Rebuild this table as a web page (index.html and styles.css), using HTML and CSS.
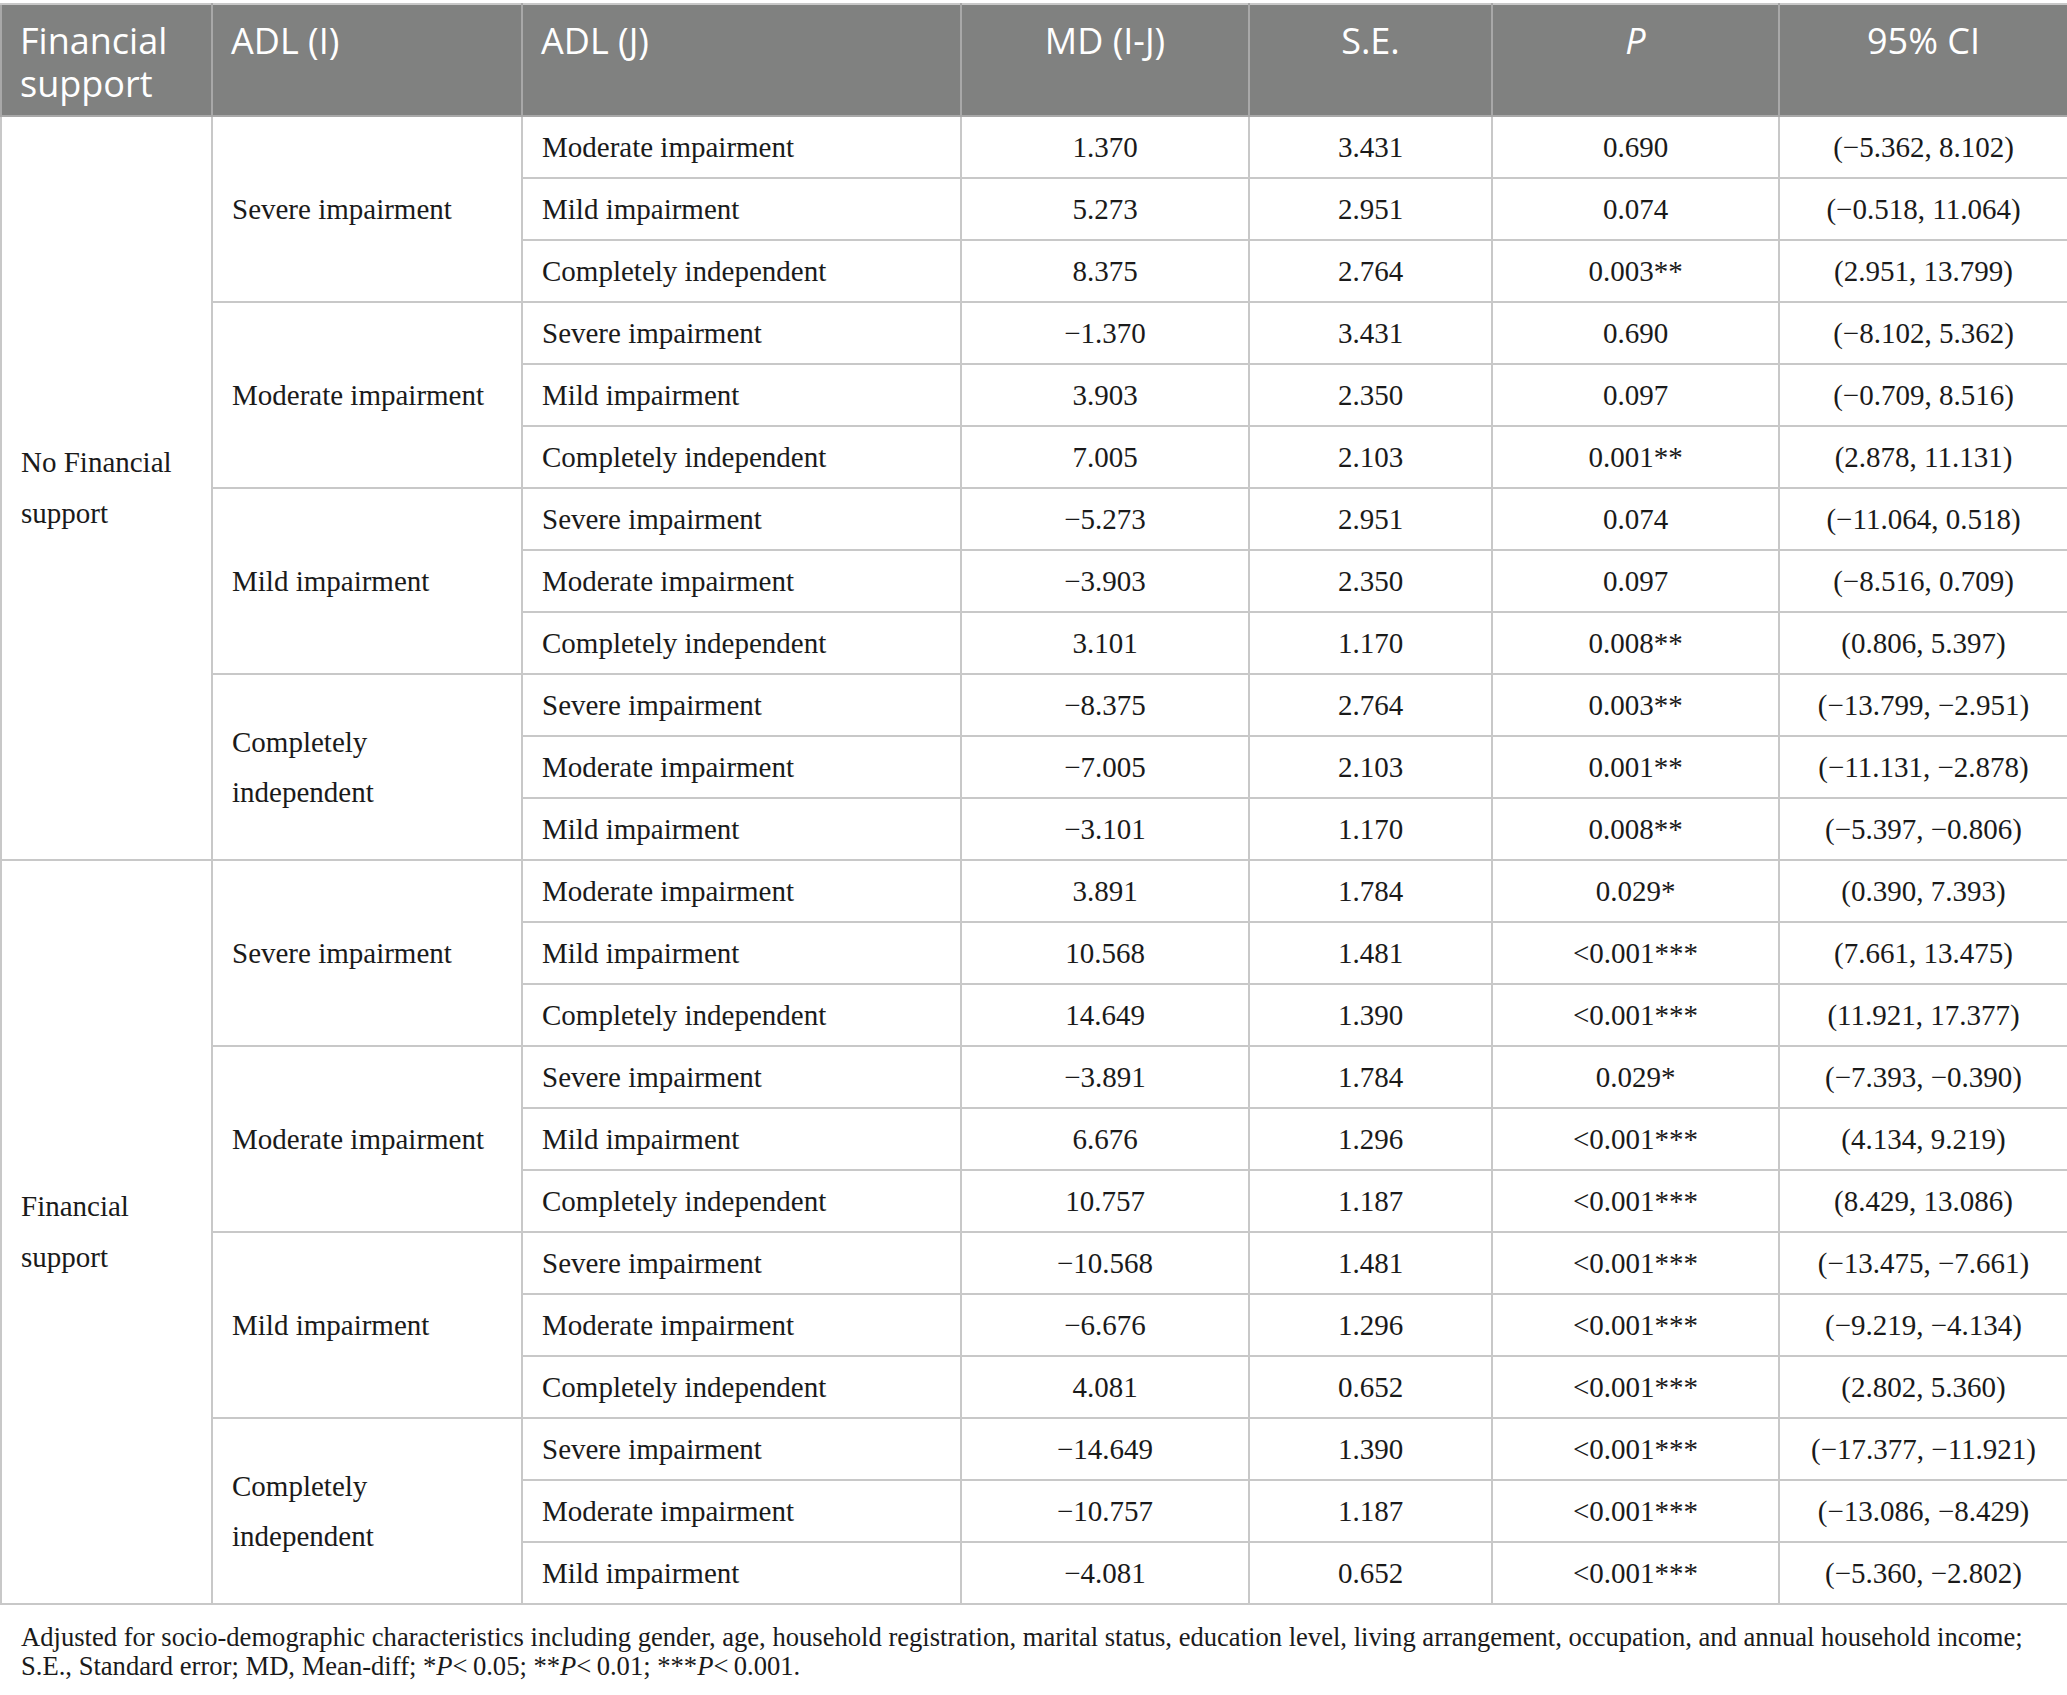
FILE: index.html
```html
<!DOCTYPE html>
<html>
<head>
  <meta charset="utf-8">
  <title>ADL comparisons by financial support</title>
  <link rel="stylesheet" href="styles.css">
</head>
<body>
  <table class="results">
    <colgroup>
      <col class="c-group">
      <col class="c-adl-i">
      <col class="c-adl-j">
      <col class="c-md">
      <col class="c-se">
      <col class="c-p">
      <col class="c-ci">
    </colgroup>
    <thead>
      <tr>
        <th class="left">Financial support</th>
        <th class="left">ADL (I)</th>
        <th class="left">ADL (J)</th>
        <th>MD (I-J)</th>
        <th>S.E.</th>
        <th><i>P</i></th>
        <th>95% CI</th>
      </tr>
    </thead>
    <tbody>
      <tr class="group-start">
        <td class="left group" rowspan="12">No Financial support</td>
        <td class="left" rowspan="3">Severe impairment</td>
        <td class="left">Moderate impairment</td><td>1.370</td><td>3.431</td><td>0.690</td><td>(−5.362, 8.102)</td>
      </tr>
      <tr><td class="left">Mild impairment</td><td>5.273</td><td>2.951</td><td>0.074</td><td>(−0.518, 11.064)</td></tr>
      <tr><td class="left">Completely independent</td><td>8.375</td><td>2.764</td><td>0.003**</td><td>(2.951, 13.799)</td></tr>

      <tr>
        <td class="left" rowspan="3">Moderate impairment</td>
        <td class="left">Severe impairment</td><td>−1.370</td><td>3.431</td><td>0.690</td><td>(−8.102, 5.362)</td>
      </tr>
      <tr><td class="left">Mild impairment</td><td>3.903</td><td>2.350</td><td>0.097</td><td>(−0.709, 8.516)</td></tr>
      <tr><td class="left">Completely independent</td><td>7.005</td><td>2.103</td><td>0.001**</td><td>(2.878, 11.131)</td></tr>

      <tr>
        <td class="left" rowspan="3">Mild impairment</td>
        <td class="left">Severe impairment</td><td>−5.273</td><td>2.951</td><td>0.074</td><td>(−11.064, 0.518)</td>
      </tr>
      <tr><td class="left">Moderate impairment</td><td>−3.903</td><td>2.350</td><td>0.097</td><td>(−8.516, 0.709)</td></tr>
      <tr><td class="left">Completely independent</td><td>3.101</td><td>1.170</td><td>0.008**</td><td>(0.806, 5.397)</td></tr>

      <tr>
        <td class="left" rowspan="3">Completely independent</td>
        <td class="left">Severe impairment</td><td>−8.375</td><td>2.764</td><td>0.003**</td><td>(−13.799, −2.951)</td>
      </tr>
      <tr><td class="left">Moderate impairment</td><td>−7.005</td><td>2.103</td><td>0.001**</td><td>(−11.131, −2.878)</td></tr>
      <tr><td class="left">Mild impairment</td><td>−3.101</td><td>1.170</td><td>0.008**</td><td>(−5.397, −0.806)</td></tr>

      <tr class="group-start">
        <td class="left group" rowspan="12">Financial support</td>
        <td class="left" rowspan="3">Severe impairment</td>
        <td class="left">Moderate impairment</td><td>3.891</td><td>1.784</td><td>0.029*</td><td>(0.390, 7.393)</td>
      </tr>
      <tr><td class="left">Mild impairment</td><td>10.568</td><td>1.481</td><td>&lt;0.001***</td><td>(7.661, 13.475)</td></tr>
      <tr><td class="left">Completely independent</td><td>14.649</td><td>1.390</td><td>&lt;0.001***</td><td>(11.921, 17.377)</td></tr>

      <tr>
        <td class="left" rowspan="3">Moderate impairment</td>
        <td class="left">Severe impairment</td><td>−3.891</td><td>1.784</td><td>0.029*</td><td>(−7.393, −0.390)</td>
      </tr>
      <tr><td class="left">Mild impairment</td><td>6.676</td><td>1.296</td><td>&lt;0.001***</td><td>(4.134, 9.219)</td></tr>
      <tr><td class="left">Completely independent</td><td>10.757</td><td>1.187</td><td>&lt;0.001***</td><td>(8.429, 13.086)</td></tr>

      <tr>
        <td class="left" rowspan="3">Mild impairment</td>
        <td class="left">Severe impairment</td><td>−10.568</td><td>1.481</td><td>&lt;0.001***</td><td>(−13.475, −7.661)</td>
      </tr>
      <tr><td class="left">Moderate impairment</td><td>−6.676</td><td>1.296</td><td>&lt;0.001***</td><td>(−9.219, −4.134)</td></tr>
      <tr><td class="left">Completely independent</td><td>4.081</td><td>0.652</td><td>&lt;0.001***</td><td>(2.802, 5.360)</td></tr>

      <tr>
        <td class="left" rowspan="3">Completely independent</td>
        <td class="left">Severe impairment</td><td>−14.649</td><td>1.390</td><td>&lt;0.001***</td><td>(−17.377, −11.921)</td>
      </tr>
      <tr><td class="left">Moderate impairment</td><td>−10.757</td><td>1.187</td><td>&lt;0.001***</td><td>(−13.086, −8.429)</td></tr>
      <tr><td class="left">Mild impairment</td><td>−4.081</td><td>0.652</td><td>&lt;0.001***</td><td>(−5.360, −2.802)</td></tr>
    </tbody>
  </table>

  <p class="footnote">
    Adjusted for socio-demographic characteristics including gender, age, household registration, marital status, education level, living arrangement, occupation, and annual household income;<br>
    S.E., Standard error; MD, Mean-diff; *<i>P</i>&lt;&thinsp;0.05; **<i>P</i>&lt;&thinsp;0.01; ***<i>P</i>&lt;&thinsp;0.001.
  </p>
</body>
</html>
```

FILE: styles.css
```css
body {
    margin: 0;
    padding-top: 3px;
    background-color: #fff;
    color: #1a1a1a;
    font-family: "Liberation Serif", "Times New Roman", serif;
}

.results {
    width: 2067px;
    border-collapse: collapse;
    table-layout: fixed;
    border: 2px solid #c8c8c8;
}

.c-group { width: 211px; }
.c-adl-i { width: 310px; }
.c-adl-j { width: 439px; }
.c-md    { width: 288px; }
.c-se    { width: 243px; }
.c-p     { width: 287px; }
.c-ci    { width: 289px; }

.results th {
    background-color: #808180;
    color: #fff;
    font-family: "Open Sans", "Noto Sans", sans-serif;
    font-weight: normal;
    font-size: 36px;
    line-height: 43px;
    text-align: center;
    vertical-align: top;
    padding: 14px 18px 10px;
    border: 2px solid #a8a8a8;
    border-top-color: #c8c8c8;
}

.results td {
    font-size: 29px;
    line-height: 50px;
    text-align: center;
    vertical-align: middle;
    padding: 5px 19px;
    border: 2px solid #c8c8c8;
}

.results .left {
    text-align: left;
}

.results td.group {
    line-height: 51px;
}

.footnote {
    margin: 18px 0 0;
    padding: 0 21px;
    font-size: 26.6px;
    line-height: 29px;
    white-space: nowrap;
}
```
